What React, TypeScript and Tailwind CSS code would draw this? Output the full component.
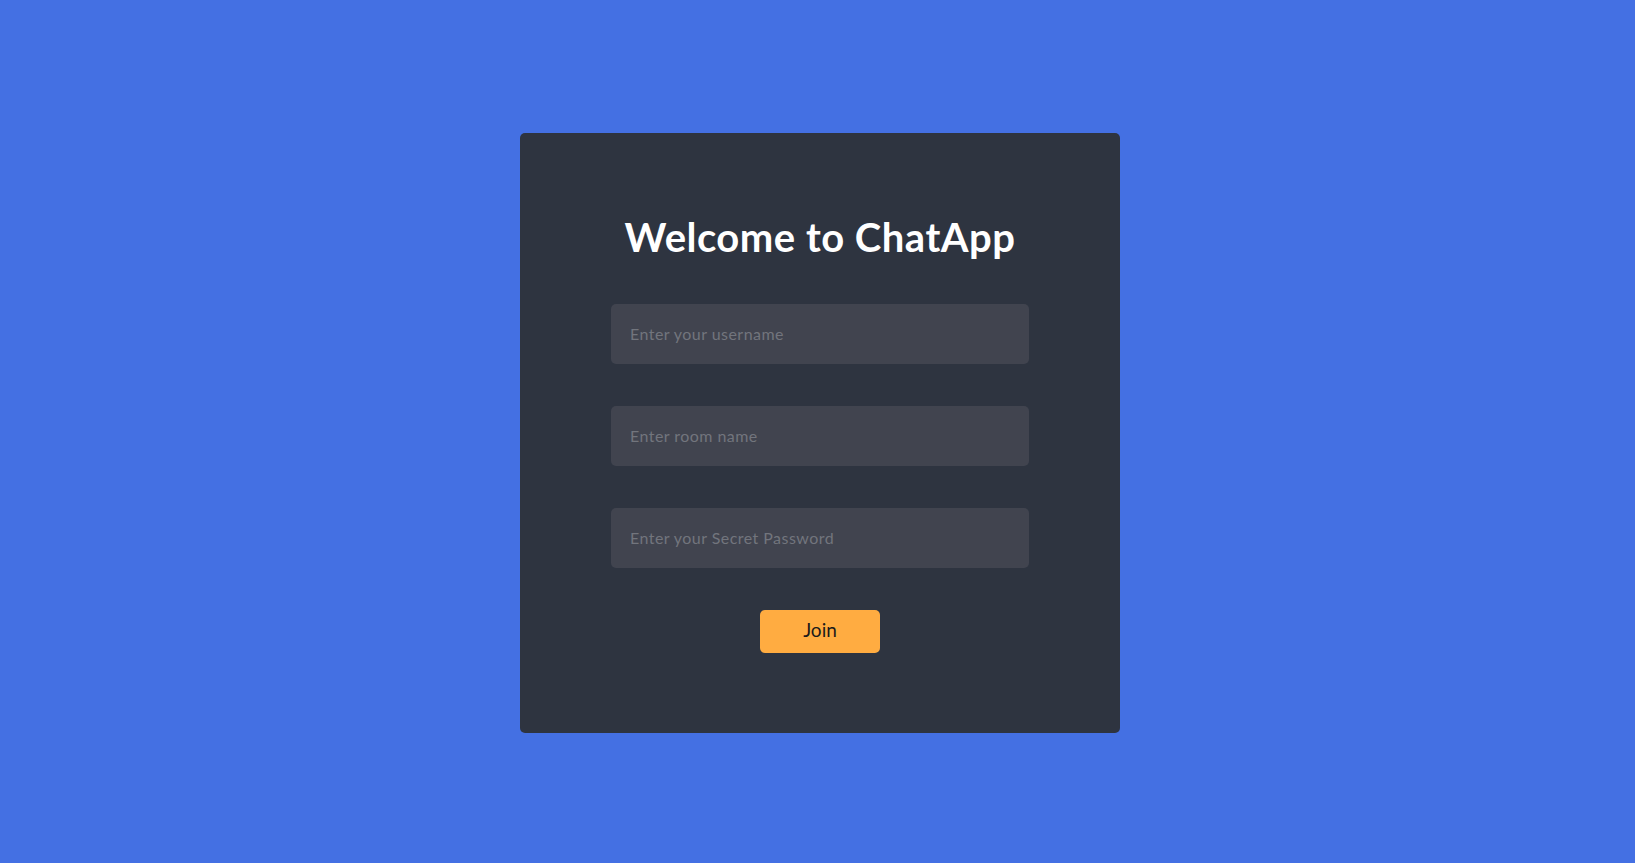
import { useState } from 'react';

const App = () => {
  // form state
  const [username, setUsername] = useState('');
  const [room, setRoom] = useState('');
  const [password, setPassword] = useState('');

  const handleJoin = (e: React.FormEvent) => {
    e.preventDefault();
  };

  return (
    <div
      className="min-h-screen w-full bg-[#4470e3] flex items-center justify-center pl-[5px] pt-[3px]"
      style={{ fontFamily: 'Lato, "Open Sans", sans-serif' }}
    >
      <div className="w-[600px] h-[600px] bg-[#2e3440] rounded-[5px] flex flex-col items-center pt-[80px]">
        <h1 className="text-[40px] leading-[48px] font-bold text-white tracking-[0.5px]">
          Welcome to ChatApp
        </h1>

        <form onSubmit={handleJoin} className="mt-[43px] w-[418px] flex flex-col items-center gap-[42px]">
          <input
            type="text"
            value={username}
            onChange={(e) => setUsername(e.target.value)}
            placeholder="Enter your username"
            className="w-full h-[60px] rounded-[5px] bg-[#41444f] px-[19px] pb-[2px] text-[16px] tracking-[0.45px] text-white placeholder:text-[#72757d] outline-none"
          />
          <input
            type="text"
            value={room}
            onChange={(e) => setRoom(e.target.value)}
            placeholder="Enter room name"
            className="w-full h-[60px] rounded-[5px] bg-[#41444f] px-[19px] pb-[2px] text-[16px] tracking-[0.45px] text-white placeholder:text-[#72757d] outline-none"
          />
          <input
            type="password"
            value={password}
            onChange={(e) => setPassword(e.target.value)}
            placeholder="Enter your Secret Password"
            className="w-full h-[60px] rounded-[5px] bg-[#41444f] px-[19px] pb-[2px] text-[16px] tracking-[0.45px] text-white placeholder:text-[#72757d] outline-none"
          />
          <button
            type="submit"
            className="w-[120px] h-[43px] rounded-[5px] bg-[#ffac41] pb-[3px] text-[19px] text-[#1b1b1b]"
          >
            Join
          </button>
        </form>
      </div>
    </div>
  );
};

export default App;
